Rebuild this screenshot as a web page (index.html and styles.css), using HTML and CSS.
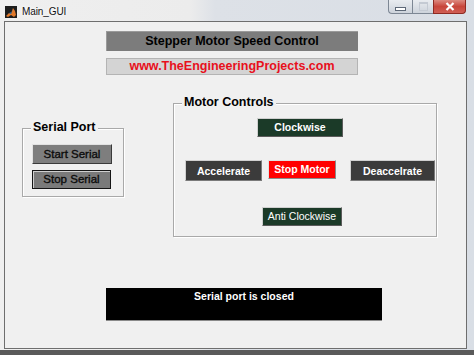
FILE: index.html
```html
<!DOCTYPE html>
<html lang="en">
<head>
    <meta charset="UTF-8">
    <meta name="viewport" content="width=device-width, initial-scale=1.0">
    <title>Main_GUI</title>
    <link rel="stylesheet" href="styles.css">
</head>
<body>
    <div class="window">
        <div class="titlebar">
            <svg class="app-icon" width="12" height="12" viewBox="0 0 12 12">
                <rect width="12" height="12" fill="#1c1c1c"/>
                <path d="M1 10 L4 7 L6 8 L8 2 L10 5 L11 9 L9 11 L6 9 L3 11 Z" fill="#e0782a"/>
                <path d="M4 7 L6 8 L8 2 L7 6 Z" fill="#3a86c8"/>
            </svg>
            <span class="title-text">Main_GUI</span>
            <div class="caption-buttons">
                <span class="cap cap-min"><span class="min-glyph"></span></span>
                <span class="cap cap-max"><span class="max-glyph"></span></span>
                <span class="cap close-btn">
                    <svg width="10" height="9" viewBox="0 0 10 9">
                        <path d="M1.5 1 L8.5 8 M8.5 1 L1.5 8" fill="none" stroke="#ffffff" stroke-width="2.2"/>
                    </svg>
                </span>
            </div>
        </div>

        <div class="client">
            <div class="heading">Stepper Motor Speed Control</div>
            <div class="url">www.TheEngineeringProjects.com</div>

            <div class="controls">
                <div class="group serial-group">
                    <span class="group-title">Serial Port</span>
                    <button class="btn btn-start">Start Serial</button>
                    <button class="btn btn-stop">Stop Serial</button>
                </div>

                <div class="group motor-group">
                    <span class="group-title">Motor Controls</span>
                    <div class="row row-top">
                        <button class="btn btn-green btn-cw">Clockwise</button>
                    </div>
                    <div class="row row-mid">
                        <button class="btn btn-dark btn-acc">Accelerate</button>
                        <button class="btn btn-red">Stop Motor</button>
                        <button class="btn btn-dark btn-dec">Deaccelrate</button>
                    </div>
                    <div class="row row-bottom">
                        <button class="btn btn-green btn-acw">Anti Clockwise</button>
                    </div>
                </div>
            </div>

            <div class="status">Serial port is closed</div>
        </div>
    </div>
</body>
</html>
```

FILE: styles.css
```css
body {
    margin: 0;
    width: 474px;
    height: 355px;
    overflow: hidden;
    font-family: "Liberation Sans", Arial, sans-serif;
}
.window {
    height: 355px;
    background: linear-gradient(90deg, #efefef 0, #ececec 190px, #dde1e7 215px, #d9dee5 100%);
    border-bottom: 5px solid #5a5a5a;
    box-sizing: border-box;
}
.titlebar {
    height: 21px;
    display: flex;
    align-items: flex-start;
}
.app-icon {
    margin: 6px 0 0 5px;
}
.title-text {
    margin: 6px 0 0 5px;
    font-family: "Liberation Sans", Arial, sans-serif;
    font-size: 10px;
    line-height: 12px;
    color: #111;
    text-shadow: 0 0 6px #fff, 0 0 3px #fff;
    letter-spacing: -0.1px;
}
.caption-buttons {
    margin-left: auto;
    margin-right: 8px;
    display: flex;
    flex-shrink: 0;
    height: 14px;
}
.cap {
    flex-shrink: 0;
    box-sizing: border-box;
    height: 14px;
    display: flex;
    align-items: center;
    justify-content: center;
    border: 1px solid #7d8794;
    border-top: none;
}
.cap-min {
    width: 24px;
    background: linear-gradient(#e9ecf0, #cdd3db);
    border-right: none;
    border-radius: 0 0 0 4px;
}
.cap-max {
    width: 21px;
    background: linear-gradient(#e9ecf0, #cdd3db);
    border-right: none;
}
.close-btn {
    width: 33px;
    background-color: #c8463b;
    background-image: linear-gradient(#dc8a80, #c8463b 50%, #d05e54);
    border-color: #8e2a22;
    border-radius: 0 0 4px 0;
}
.min-glyph {
    width: 9px;
    height: 2px;
    margin-top: 5px;
    background: #fff;
    border: 1px solid #5d6877;
}
.max-glyph {
    width: 7px;
    height: 6px;
    border: 1px solid #c4cad3;
    border-top-width: 2px;
}
.client {
    margin: 0 7px 0 4px;
    height: 328px;
    border: 1px solid #6e6e6e;
    background: #f0f0f0;
    box-sizing: border-box;
    overflow: hidden;
}
.heading {
    margin: 9px 0 0 101px;
    width: 252px;
    height: 20px;
    background: #7c7c7c;
    box-shadow: inset 1px 1px #9a9a9a;
    font-weight: bold;
    font-size: 12.5px;
    line-height: 20px;
    text-align: center;
    color: #000;
}
.url {
    margin: 7px 0 0 101px;
    width: 252px;
    height: 17px;
    box-sizing: border-box;
    background: #d4d4d4;
    border: 1px solid #b4b4b4;
    font-weight: bold;
    font-size: 12.5px;
    line-height: 15px;
    text-align: center;
    color: #e8101c;
}
.controls {
    display: flex;
    align-items: flex-start;
}
.group {
    position: relative;
    box-sizing: border-box;
    border: 1px solid #a9a9a9;
    box-shadow: 1px 1px #ffffff, inset 1px 1px #ffffff;
}
.group-title {
    position: absolute;
    top: -9px;
    left: 8px;
    padding: 0 2px;
    background: #f0f0f0;
    font-weight: bold;
    font-size: 12.5px;
    line-height: 14px;
    color: #000;
}
.serial-group {
    margin: 53px 0 0 17px;
    width: 102px;
    height: 69px;
    padding: 15px 0 0 9px;
}
.motor-group {
    margin: 28px 0 0 49px;
    width: 264px;
    height: 134px;
}
.btn {
    display: block;
    margin: 0;
    padding: 0;
    box-sizing: border-box;
    font-family: "Liberation Sans", Arial, sans-serif;
    text-align: center;
    white-space: nowrap;
    border: 1px solid;
    border-color: #e2e2e2 #3a3a3a #3a3a3a #e2e2e2;
}
.btn-start {
    width: 80px;
    height: 20px;
    background: #7e7e7e;
    font-size: 11.5px;
    line-height: 18px;
    color: #0c0c0c;
    -webkit-text-stroke: 0.35px #0c0c0c;
}
.btn-stop {
    margin-top: 6px;
    width: 79px;
    height: 19px;
    background: #7a7a7a;
    border-color: #151515;
    box-shadow: inset 1px 1px #cfcfcf;
    font-size: 11.5px;
    line-height: 17px;
    color: #0c0c0c;
    -webkit-text-stroke: 0.35px #0c0c0c;
}
.row {
    display: flex;
    align-items: flex-start;
}
.row-top {
    padding: 14px 0 0 83px;
}
.row-mid {
    margin-top: 23px;
    padding-left: 11px;
}
.row-bottom {
    margin-top: 26px;
    padding-left: 88px;
}
.btn-green {
    background: #1b3a28;
    color: #fff;
    border-color: #cfcfcf #5a5a5a #5a5a5a #cfcfcf;
}
.btn-cw {
    width: 86px;
    height: 19px;
    font-weight: bold;
    font-size: 10.5px;
    line-height: 17px;
}
.btn-acw {
    width: 80px;
    height: 19px;
    font-size: 10.5px;
    line-height: 17px;
}
.btn-dark {
    background: #3b3b3b;
    color: #fff;
    font-weight: bold;
    font-size: 10.5px;
    height: 21px;
    line-height: 18px;
    border-color: #d0d0d0 #7a7a7a #7a7a7a #d0d0d0;
}
.btn-acc {
    width: 77px;
}
.btn-dec {
    width: 85px;
    margin-left: 14px;
}
.btn-red {
    margin-left: 6px;
    width: 68px;
    height: 19px;
    background: #ff0000;
    color: #fff;
    font-weight: bold;
    font-size: 10.5px;
    line-height: 17px;
    border-color: #e0e0e0 #8a8a8a #8a8a8a #e0e0e0;
}
.status {
    margin: 51px 0 0 101px;
    width: 276px;
    height: 33px;
    box-sizing: border-box;
    padding-top: 2px;
    background: #000;
    border-bottom: 1px solid #8a8a8a;
    color: #fff;
    font-weight: bold;
    font-size: 10.5px;
    line-height: 13px;
    text-align: center;
}
```
